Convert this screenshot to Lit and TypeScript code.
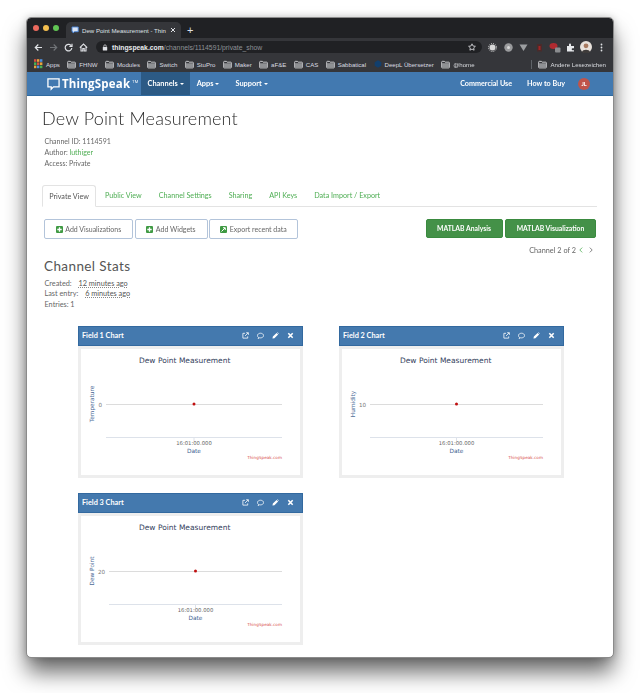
import { LitElement, html, css, svg } from "lit";
import { customElement, property } from "lit/decorators.js";

const folder = html`<svg class="folder" width="9" height="9" viewBox="0 0 10 9">
  <path d="M.7 2V7.600c0 .4.3.7.7.7h7.200c.4 0 .7-.3.7-.7V2.600c0-.4-.3-.7-.7-.7H4.600L3.800 1H1.400C1 1 .7 1.400.7 2Z" fill="none" stroke="#d6d7d9" stroke-width="1"/>
  <path d="M1 3h8v5H1z" fill="#8f9194"/>
</svg>`;

const appsGrid = html`<svg width="9" height="10" viewBox="0 0 9 10">
  ${["#d9503f", "#e8a33d", "#4d90e0", "#4caf50", "#d9503f", "#e8a33d", "#e8a33d", "#4d90e0", "#4caf50"].map(
    (c, i) => svg`<rect x=${(i % 3) * 3} y=${Math.floor(i / 3) * 3.2 + 0.2} width="2.4" height="2.6" fill=${c} />`,
  )}
</svg>`;

@customElement("field-chart")
class FieldChart extends LitElement {
  @property() name = "";
  @property() axis = "";
  @property() tick = "";
  @property({ type: Number }) plotLeft = 28;

  static styles = css`
    :host {
      display: block;
      width: 225px;
      height: 152px;
    }

    .head {
      height: 20px;
      box-sizing: border-box;
      background: #4479ae;
      border: 1px solid #33699f;
      display: flex;
      align-items: center;
      padding: 0 8px 0 3px;
      color: #fff;
      font: 700 7.300px "Lato", sans-serif;
    }

    .icons {
      margin-left: auto;
      display: flex;
      gap: 8px;
      align-items: center;
    }

    .body {
      height: 132px;
      box-sizing: border-box;
      border: 3px solid #eeeeee;
      background: #fff;
    }

    svg.plot {
      display: block;
      font-family: "DejaVu Sans", sans-serif;
    }
  `;

  render() {
    const right = 201;
    const mid = (this.plotLeft + right) / 2;
    return html`
      <div class="head">
        <span>${this.name}</span>
        <span class="icons">
          <svg width="7" height="7" viewBox="0 0 8 8" fill="none" stroke="#fff" stroke-width=".9">
            <path d="M6.500 5v2H1V1.500h2.500" /><path d="M3.500 4.500 7 1M4.800 .8H7.300V3.300" />
          </svg>
          <svg width="7" height="7" viewBox="0 0 8 8" fill="none" stroke="#fff" stroke-width=".9">
            <path d="M1.800 6.200C.8 5.600.5 4.900.5 4.100c0-1.500 1.600-2.700 3.500-2.700s3.500 1.200 3.500 2.700S5.900 6.700 4 6.700c-.4 0-.8 0-1.100-.1L1.300 7.500Z" />
          </svg>
          <svg width="7" height="7" viewBox="0 0 8 8" fill="#fff">
            <path d="M.5 7.500 1 5.200 5.200 1 7 2.800 2.800 7ZM5.800 .5l.6-.3L7.800 1.600l-.3.6Z" />
          </svg>
          <svg width="7" height="7" viewBox="0 0 8 8" fill="none" stroke="#fff" stroke-width="1.800">
            <path d="M1.500 1.500 6.500 6.500M6.500 1.500 1.500 6.500" />
          </svg>
        </span>
      </div>
      <div class="body">
        <svg class="plot" width="219" height="126" viewBox="0 0 219 126">
          <text x="103.700" y="14" text-anchor="middle" font-size="7.500" fill="#33415c">Dew Point Measurement</text>
          <line x1=${this.plotLeft} x2=${right} y1="55.500" y2="55.500" stroke="#dcdcdc" stroke-width="1" />
          <line x1=${this.plotLeft} x2=${right} y1="88.500" y2="88.500" stroke="#dde2ea" stroke-width="1" />
          <line x1=${mid} x2=${mid} y1="88" y2="92" stroke="#dde2ea" stroke-width="1" />
          <circle cx=${mid} cy="55" r="1.500" fill="#c00f0f" />
          <text x=${this.plotLeft - 4} y="57.500" text-anchor="end" font-size="5.600" fill="#777">${this.tick}</text>
          <text transform="translate(13 55) rotate(-90)" text-anchor="middle" font-size="5.800" fill="#4d6a96">
            ${this.axis}
          </text>
          <text x=${mid} y="96" text-anchor="middle" font-size="5.300" fill="#666">16:01:00.000</text>
          <text x=${mid} y="103.500" text-anchor="middle" font-size="5.800" fill="#3f5f93">Date</text>
          <text x=${right} y="110" text-anchor="end" font-size="4.200" fill="#d9534f">ThingSpeak.com</text>
        </svg>
      </div>
    `;
  }
}

@customElement("app-root")
export class AppRoot extends LitElement {
  static styles = css`
    :host {
      display: block;
      width: 640px;
      height: 693px;
      overflow: hidden;
      background: #fff;
      font-family: "Lato", sans-serif;
    }

    .shadow {
      width: 586px;
      height: 639px;
      margin: 18px 0 0 27px;
      border-radius: 4px;
      box-shadow: 0 15px 22px rgba(0, 0, 0, 0.6), 0 0 8px rgba(0, 0, 0, 0.25);
    }

    .window {
      width: 586px;
      height: 639px;
      border-radius: 4px;
      overflow: hidden;
      background: #fff;
      outline: 1px solid #8b8b8b;
      filter: blur(0.3px);
    }

    /* browser chrome */
    .tabs {
      height: 20px;
      background: #202124;
      display: flex;
      align-items: flex-end;
      padding-left: 6px;
      color: #dfe1e5;
    }

    .lights {
      display: flex;
      gap: 4px;
      align-self: center;
      margin-right: 7px;
    }

    .lights i {
      width: 6px;
      height: 6px;
      border-radius: 50%;
    }

    .tab {
      width: 115px;
      height: 16px;
      box-sizing: border-box;
      background: #35363a;
      border-radius: 5px 5px 0 0;
      display: flex;
      align-items: center;
      gap: 3px;
      padding: 0 5px;
      font: 6.100px "Liberation Sans", sans-serif;
      white-space: nowrap;
    }

    .tab span {
      flex: 1;
    }

    .plus {
      margin-left: 6px;
      font: 11px/16px "Liberation Sans", sans-serif;
      height: 16px;
    }

    .toolbar {
      height: 18px;
      background: #35363a;
      display: flex;
      align-items: center;
      gap: 6px;
      padding-left: 7px;
      box-sizing: border-box;
    }

    .address {
      width: 386px;
      height: 12px;
      margin-left: 2px;
      border-radius: 6px;
      background: #202124;
      display: flex;
      align-items: center;
      padding: 0 6px;
      box-sizing: border-box;
      font: 6.800px "Liberation Sans", sans-serif;
      color: #8e9196;
      gap: 4px;
    }

    .address b {
      color: #e8eaed;
      font-weight: 700;
    }

    .address svg:last-child {
      margin-left: auto;
    }

    .exts {
      display: grid;
      grid-auto-flow: column;
      grid-auto-columns: 15.500px;
      justify-items: center;
      align-items: center;
      margin-left: -3px;
    }

    .bookmarks {
      height: 16px;
      background: #35363a;
      display: flex;
      align-items: center;
      padding-left: 7px;
      color: #dadce0;
      font: 6.100px "Liberation Sans", sans-serif;
      white-space: nowrap;
    }

    .bm {
      display: flex;
      align-items: center;
      gap: 3px;
      margin-right: 7.400px;
    }

    .bm-right {
      margin-left: auto;
      display: flex;
      align-items: center;
      gap: 3px;
      padding-right: 7px;
    }

    .sep {
      width: 1px;
      height: 9px;
      background: #5f6368;
      margin-right: 3px;
    }

    /* site nav */
    .nav {
      height: 24px;
      background: #4279b0;
      border-bottom: 1px solid #2f6a9f;
      box-sizing: border-box;
      display: flex;
      align-items: stretch;
      color: #fff;
      font-size: 7.400px;
      font-weight: 700;
    }

    .logo {
      display: flex;
      align-items: center;
      margin-left: 20px;
      width: 94px;
      gap: 2px;
      font: 700 11.500px/1 "Open Sans", sans-serif;
      letter-spacing: 0.2px;
    }

    .logo sup {
      font-size: 4px;
      margin-top: -4px;
      font-weight: 400;
    }

    .navitem {
      display: flex;
      align-items: center;
      gap: 2px;
      padding: 0 6.500px;
    }

    .navitem.active {
      background: #2c5a85;
    }

    .navitem.support {
      margin-left: 3px;
    }

    .caret {
      width: 0;
      height: 0;
      border: 2px solid transparent;
      border-top-color: #fff;
      border-bottom: 0;
    }

    .navright {
      margin-left: auto;
      display: flex;
      align-items: center;
      gap: 15px;
      padding-right: 23px;
      font-size: 7.200px;
    }

    .avatar {
      width: 12px;
      height: 12px;
      border-radius: 50%;
      background: #c0544a;
      font-size: 5.500px;
      display: flex;
      align-items: center;
      justify-content: center;
      margin-left: -2px;
    }

    /* page */
    .page {
      padding: 9px 16px 0 15px;
      color: #666;
      font-size: 7px;
      line-height: 11px;
    }

    h1 {
      margin: 0;
      font: 300 18px/26px "Lato", sans-serif;
      letter-spacing: 0.15px;
      color: #2b2b2b;
    }

    .meta {
      margin: 4.500px 0 0 2.500px;
    }

    .green {
      color: #4fae54;
    }

    .tabbar {
      margin-top: 16.500px;
      display: flex;
      height: 22px;
      border-bottom: 1px solid #e3e3e3;
      box-sizing: border-box;
      font-size: 7.200px;
    }

    .tabbar a {
      color: #4fae54;
      padding: 0 8px;
      margin-right: 1px;
      height: 22px;
      line-height: 22px;
      white-space: nowrap;
    }

    .tabbar a.on {
      color: #555;
      width: 54px;
      text-align: center;
      border: 1px solid #e3e3e3;
      border-bottom: 1px solid #fff;
      border-radius: 3px 3px 0 0;
      box-sizing: border-box;
      padding: 0;
      line-height: 21px;
    }

    .actions {
      display: flex;
      margin: 12px 1px 0 2px;
      gap: 1.500px;
      font-size: 7px;
    }

    .btn {
      height: 20px;
      box-sizing: border-box;
      border: 1px solid #b3c4da;
      border-radius: 2px;
      display: flex;
      align-items: center;
      justify-content: center;
      gap: 2.500px;
      color: #666;
      background: #fff;
    }

    .btn.a {
      width: 89px;
    }

    .btn.b {
      width: 73px;
    }

    .btn.c {
      width: 89px;
    }

    .btn.m {
      background: #449148;
      border: 1px solid #3a8a3f;
      color: #fff;
      font-weight: 700;
      font-size: 6.800px;
      height: 19px;
    }

    .btn.m1 {
      width: 77px;
      margin-left: auto;
    }

    .btn.m2 {
      width: 91px;
      margin-left: 1px;
    }

    .pager {
      display: flex;
      justify-content: flex-end;
      align-items: center;
      gap: 6px;
      margin-top: 5.500px;
      padding-right: 4px;
      font-size: 7.300px;
    }

    .pager span {
      margin-right: -3px;
    }

    h2 {
      margin: 1.500px 0 0 2px;
      font: 400 13.500px/18px "Lato", sans-serif;
      letter-spacing: 0.4px;
      color: #555;
    }

    .stats {
      margin: 3.600px 0 0 2.500px;
      font-size: 7.300px;
      line-height: 10.800px;
    }

    .stats u {
      text-decoration: underline dotted #888;
      text-underline-offset: 1px;
      color: #555;
      margin-left: 5px;
    }

    .charts {
      display: grid;
      grid-template-columns: 225px 225px;
      column-gap: 36px;
      row-gap: 15px;
      margin: 15px 0 0 36px;
    }
  `;

  private plusIcon(glyph: "plus" | "export") {
    return html`<svg width="7" height="7" viewBox="0 0 7 7">
      <rect width="7" height="7" rx="1" fill="#3f9a43" />
      ${glyph === "plus"
        ? svg`<path d="M3.500 1.300V5.700M1.300 3.500H5.700" stroke="#fff" stroke-width="1.300" />`
        : svg`<path d="M1.500 5.500 5 2M3 1.700H5.300V4" stroke="#fff" stroke-width="1" fill="none" />`}
    </svg>`;
  }

  render() {
    const bookmarks = ["FHNW", "Modules", "Switch", "StuPro", "Maker", "aF&E", "CAS", "Sabbatical"];
    return html`
      <div class="shadow">
        <div class="window">
          <div class="tabs">
            <div class="lights">
              <i style="background:#ec6a5e"></i>
              <i style="background:#f4bf4f"></i>
              <i style="background:#61c554"></i>
            </div>
            <div class="tab">
              <svg width="8" height="8" viewBox="0 0 8 8">
                <path d="M1 1h6.200v4.700H3.500L2 7V5.700H1Z" fill="#dce6f5" stroke="#4a86d8" stroke-width=".9" />
              </svg>
              <span>Dew Point Measurement - Thin</span>
              <svg width="6" height="6" viewBox="0 0 6 6" stroke="#dfe1e5" stroke-width="1">
                <path d="M1 1 5 5M5 1 1 5" />
              </svg>
            </div>
            <div class="plus">+</div>
          </div>

          <div class="toolbar">
            <svg width="9" height="9" viewBox="0 0 9 9" fill="none" stroke="#dfe1e5" stroke-width="1.200">
              <path d="M8 4.500H1.500M4.300 1.500 1.300 4.500 4.300 7.500" />
            </svg>
            <svg width="9" height="9" viewBox="0 0 9 9" fill="none" stroke="#6f7276" stroke-width="1.200">
              <path d="M1 4.500H7.500M4.700 1.500 7.700 4.500 4.700 7.500" />
            </svg>
            <svg width="9" height="9" viewBox="0 0 9 9" fill="none" stroke="#dfe1e5" stroke-width="1.200">
              <path d="M7.500 3.200A3.300 3.300 0 1 0 7.800 5" /><path d="M8 .8V3.500H5.300" />
            </svg>
            <svg width="9" height="9" viewBox="0 0 9 9" fill="none" stroke="#dfe1e5" stroke-width="1.100">
              <path d="M.8 4.600 4.500 1l3.700 3.600M2 3.800V8h1.800V5.500h1.400V8H7V3.800" />
            </svg>
            <div class="address">
              <svg width="6" height="7" viewBox="0 0 6 7" fill="#dfe1e5">
                <rect x=".8" y="3" width="4.400" height="3.600" rx=".5" />
                <path d="M1.800 3V2a1.200 1.200 0 0 1 2.400 0v1" fill="none" stroke="#dfe1e5" stroke-width=".7" />
              </svg>
              <span><b>thingspeak.com</b>/channels/1114591/private_show</span>
              <svg width="8" height="8" viewBox="0 0 8 8" fill="none" stroke="#dfe1e5" stroke-width=".8">
                <path d="M4 .8 5 3l2.400.3-1.700 1.600.4 2.300L4 6.100 1.900 7.200l.4-2.300L.6 3.300 3 3Z" />
              </svg>
            </div>
            <div class="exts">
              <svg width="9" height="9" viewBox="0 0 9 9"><circle cx="4.500" cy="4.500" r="3" fill="#d8d8d8" /><circle cx="4.500" cy="4.500" r="4" fill="none" stroke="#d8d8d8" stroke-dasharray="1 1.100" /></svg>
              <svg width="9" height="9" viewBox="0 0 9 9"><circle cx="4.500" cy="4.500" r="4.200" fill="#9a9b9d" /><circle cx="4.500" cy="4.500" r="1.500" fill="#d9d9d9" /></svg>
              <svg width="9" height="9" viewBox="0 0 9 9"><path d="M.5 1.500H8.500L4.500 8Z" fill="#9c9ea1" /></svg>
              <svg width="9" height="9" viewBox="0 0 9 9"><rect x="2" y="1" width="5" height="7.500" fill="#4a2a2a" /><rect x="3.500" y="3" width="2" height="4" fill="#a32424" /></svg>
              <svg width="12" height="11" viewBox="0 0 12 11"><ellipse cx="4.500" cy="4" rx="4" ry="3" fill="#b02a30" /><rect x="6" y="5.500" width="5.500" height="5" rx="1" fill="#8a8c8f" /></svg>
              <svg width="9" height="9" viewBox="0 0 9 9"><path d="M1 3h2V1.500a1 1 0 0 1 2 0V3h3v2.200H6.700a1 1 0 0 0 0 2H8V8.500H1Z" fill="#e8eaed" /></svg>
              <svg width="12" height="12" viewBox="0 0 12 12"><circle cx="6" cy="6" r="6" fill="#e9e2dc" /><circle cx="6" cy="4.800" r="2.400" fill="#a87a60" /><path d="M2 11c.5-3 7.500-3 8 0a6 6 0 0 1-8 0Z" fill="#3e3b3a" /></svg>
              <svg width="3" height="9" viewBox="0 0 3 9" fill="#dfe1e5"><circle cx="1.500" cy="1.500" r=".9" /><circle cx="1.500" cy="4.500" r=".9" /><circle cx="1.500" cy="7.500" r=".9" /></svg>
            </div>
          </div>

          <div class="bookmarks">
            <div class="bm">${appsGrid}<span>Apps</span></div>
            ${bookmarks.map((b) => html`<div class="bm">${folder}<span>${b}</span></div>`)}
            <div class="bm">
              <svg width="8" height="8" viewBox="0 0 8 8"><path d="M4 .3 7.300 2.200V5.800L4 7.700.7 5.800V2.200Z" fill="#123f6d" /></svg>
              <span>DeepL Übersetzer</span>
            </div>
            <div class="bm">${folder}<span>@home</span></div>
            <div class="bm-right"><i class="sep"></i>${folder}<span>Andere Lesezeichen</span></div>
          </div>

          <div class="nav">
            <div class="logo">
              <svg width="13" height="14" viewBox="0 0 14 14" fill="none" stroke="#fff" stroke-width="1.400">
                <path d="M1 1.500H13V10H7L4.500 12.500V10H1Z" />
              </svg>
              <span>ThingSpeak</span><sup>TM</sup>
            </div>
            <div class="navitem active">Channels <i class="caret"></i></div>
            <div class="navitem">Apps <i class="caret"></i></div>
            <div class="navitem support">Support<i class="caret"></i></div>
            <div class="navright">
              <span>Commercial Use</span>
              <span>How to Buy</span>
              <span class="avatar">JL</span>
            </div>
          </div>

          <div class="page">
            <h1>Dew Point Measurement</h1>
            <div class="meta">
              Channel ID: 1114591<br />
              Author: <span class="green">luthiger</span><br />
              Access: Private
            </div>

            <div class="tabbar">
              <a class="on">Private View</a>
              <a>Public View</a>
              <a>Channel Settings</a>
              <a>Sharing</a>
              <a>API Keys</a>
              <a>Data Import / Export</a>
            </div>

            <div class="actions">
              <div class="btn a">${this.plusIcon("plus")} Add Visualizations</div>
              <div class="btn b">${this.plusIcon("plus")} Add Widgets</div>
              <div class="btn c">${this.plusIcon("export")} Export recent data</div>
              <div class="btn m m1">MATLAB Analysis</div>
              <div class="btn m m2">MATLAB Visualization</div>
            </div>

            <div class="pager">
              <span>Channel 2 of 2</span>
              <svg width="4" height="6" viewBox="0 0 4 6" fill="none" stroke="#4fae54" stroke-width=".8"><path d="M3.200 .6.800 3l2.400 2.400" /></svg>
              <svg width="4" height="6" viewBox="0 0 4 6" fill="none" stroke="#666" stroke-width=".8"><path d="M.8 .6 3.200 3 .8 5.400" /></svg>
            </div>

            <h2>Channel Stats</h2>
            <div class="stats">
              Created: <u>12 minutes ago</u><br />
              Last entry: <u>6 minutes ago</u><br />
              Entries: 1
            </div>

            <div class="charts">
              <field-chart name="Field 1 Chart" axis="Temperature" tick="0" .plotLeft=${25}></field-chart>
              <field-chart name="Field 2 Chart" axis="Humidity" tick="10" .plotLeft=${28}></field-chart>
              <field-chart name="Field 3 Chart" axis="Dew Point" tick="20" .plotLeft=${28}></field-chart>
            </div>
          </div>
        </div>
      </div>
    `;
  }
}
